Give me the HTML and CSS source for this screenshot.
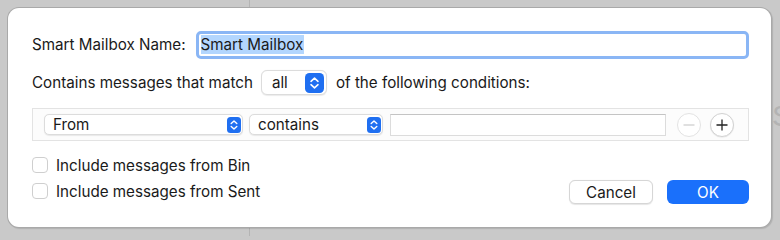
FILE: index.html
```html
<!DOCTYPE html>
<html lang="en">
<head>
<meta charset="utf-8">
<title>Smart Mailbox</title>
<link rel="stylesheet" href="styles.css">
</head>
<body>
<div class="bg-line"></div>
<div class="bg-clip"><span class="bg-glyph">S</span></div>
<div class="dialog">
  <div class="row name-row">
    <span class="label">Smart Mailbox Name:</span>
    <div class="name-field"><span class="sel">Smart Mailbox</span></div>
  </div>
  <div class="row match-row">
    <span class="label">Contains messages that match</span>
    <div class="popup popup-all">
      <span class="popup-text">all</span>
      <svg class="stepper big" viewBox="0 0 19 20" width="19" height="20"><rect x="0" y="0" width="19" height="20" rx="4.5" fill="#1f6ff1"/><path d="M6 8.3 L9.5 5.2 L13 8.3 M6 11.7 L9.5 14.8 L13 11.7" fill="none" stroke="#fff" stroke-width="1.6" stroke-linecap="round" stroke-linejoin="round"/></svg>
    </div>
    <span class="label tail">of the following conditions:</span>
  </div>
  <div class="conditions">
    <div class="popup small popup-from">
      <span class="popup-text">From</span>
      <svg class="stepper" viewBox="0 0 14 16" width="14" height="16"><rect x="0" y="0" width="14" height="16" rx="3.5" fill="#1f6ff1"/><path d="M4.2 6.6 L7 4 L9.8 6.6 M4.2 9.4 L7 12 L9.8 9.4" fill="none" stroke="#fff" stroke-width="1.4" stroke-linecap="round" stroke-linejoin="round"/></svg>
    </div>
    <div class="popup small popup-contains">
      <span class="popup-text">contains</span>
      <svg class="stepper" viewBox="0 0 14 16" width="14" height="16"><rect x="0" y="0" width="14" height="16" rx="3.5" fill="#1f6ff1"/><path d="M4.2 6.6 L7 4 L9.8 6.6 M4.2 9.4 L7 12 L9.8 9.4" fill="none" stroke="#fff" stroke-width="1.4" stroke-linecap="round" stroke-linejoin="round"/></svg>
    </div>
    <div class="value-field"></div>
    <div class="round-btn disabled">
      <svg viewBox="0 0 24 24" width="24" height="24"><path d="M6.5 12 H17.5" stroke="#cfcfcf" stroke-width="1.3"/></svg>
    </div>
    <div class="round-btn">
      <svg viewBox="0 0 24 24" width="24" height="24"><path d="M6.5 12 H17.5 M12 6.5 V17.5" stroke="#222" stroke-width="1.3"/></svg>
    </div>
  </div>
  <div class="footer">
    <div class="checks">
      <label class="check"><span class="box"></span><span class="label">Include messages from Bin</span></label>
      <label class="check"><span class="box"></span><span class="label">Include messages from Sent</span></label>
    </div>
    <div class="buttons">
      <div class="btn cancel">Cancel</div>
      <div class="btn ok">OK</div>
    </div>
  </div>
</div>
</body>
</html>
```
FILE: styles.css
```css
* { box-sizing: border-box; }
html, body { margin: 0; }
body {
  width: 780px;
  height: 236px;
  background: #c9c9c9;
  padding: 8px 0 0 8px;
  font-family: Inter, "Liberation Sans", sans-serif;
  font-size: 15.2px;
  color: #1a1a1a;
  position: relative;
  overflow: hidden;
}
.label { white-space: nowrap; flex-shrink: 0; }
.bg-line {
  position: absolute;
  left: 249px;
  top: 0;
  width: 1px;
  height: 236px;
  background: #b4b4b4;
}
.bg-clip {
  position: absolute;
  left: 772px;
  top: 98px;
  width: 8px;
  height: 40px;
  overflow: hidden;
}
.bg-glyph {
  display: block;
  font-size: 30px;
  line-height: 36px;
  color: #b3b3b3;
  font-family: "Liberation Sans", sans-serif;
}
.dialog {
  position: relative;
  width: 763px;
  height: 219px;
  background: #fff;
  border-radius: 11px;
  box-shadow: 0 0 0 1px #a9a9a9, 1px 1px 1px 1px rgba(0,0,0,0.12);
  padding: 23px 22px 0 24px;
  display: flex;
  flex-direction: column;
}
.row { display: flex; align-items: center; }
.name-row { height: 27px; }
.name-field {
  margin-left: 10px;
  flex: 1;
  min-width: 0;
  height: 28px;
  border: 3px solid #8ab6f5;
  border-radius: 5px;
  padding: 0 0 0 2px;
  display: flex;
  align-items: center;
}
.sel {
  background: #b3d6fe;
  line-height: 19px;
  padding-right: 1px;
  white-space: nowrap;
}
.match-row { margin-top: 12px; height: 25px; }
.popup {
  display: flex;
  align-items: center;
  justify-content: space-between;
  background: #fff;
  border: 1px solid #dcdcdc;
  border-radius: 6px;
  box-shadow: 0 0.5px 1px rgba(0,0,0,0.08);
  flex-shrink: 0;
}
.popup-all {
  margin-left: 8px;
  width: 66px;
  height: 25px;
  padding: 0 2px 0 10px;
}
.stepper { display: block; flex-shrink: 0; }
.tail { margin-left: 9px; }
.conditions {
  margin-top: 13px;
  height: 33px;
  border: 1px solid #e3e3e3;
  background: #fcfcfc;
  display: flex;
  align-items: center;
  padding: 0 11px;
}
.popup.small {
  height: 21px;
  border-radius: 5px;
  padding: 0 1px 0 8px;
}
.popup-from { width: 199px; }
.popup-contains { width: 134px; margin-left: 6px; }
.value-field {
  width: 276px;
  height: 22px;
  margin-left: 7px;
  background: #fff;
  border: 1px solid #dcdcdc;
  border-top-color: #c4c4c4;
  flex-shrink: 0;
}
.round-btn {
  width: 24px;
  height: 24px;
  border-radius: 50%;
  background: #fff;
  border: 1px solid #d2d2d2;
  margin-left: 11px;
  box-shadow: 0 0.5px 1px rgba(0,0,0,0.1);
  display: flex;
  align-items: center;
  justify-content: center;
  flex-shrink: 0;
}
.round-btn + .round-btn { margin-left: 9px; }
.round-btn.disabled { border-color: #e3e3e3; box-shadow: none; }
.round-btn svg { display: block; margin: -1px; }
.footer {
  margin-top: 16px;
  display: flex;
  justify-content: space-between;
  align-items: flex-start;
}
.checks { display: flex; flex-direction: column; gap: 10px; }
.check { display: flex; align-items: center; height: 16px; }
.box {
  width: 16px;
  height: 16px;
  border: 1px solid #cfcfcf;
  border-radius: 4px;
  background: #fff;
  margin-right: 8px;
}
.buttons { display: flex; gap: 14px; margin-top: 23px; }
.btn {
  height: 24px;
  border-radius: 6px;
  display: flex;
  align-items: center;
  justify-content: center;
}
.cancel {
  width: 84px;
  background: #fff;
  border: 1px solid #d6d6d6;
  box-shadow: 0 0.5px 1px rgba(0,0,0,0.1);
}
.ok {
  width: 82px;
  background: #1a70fb;
  color: #fff;
}
```
